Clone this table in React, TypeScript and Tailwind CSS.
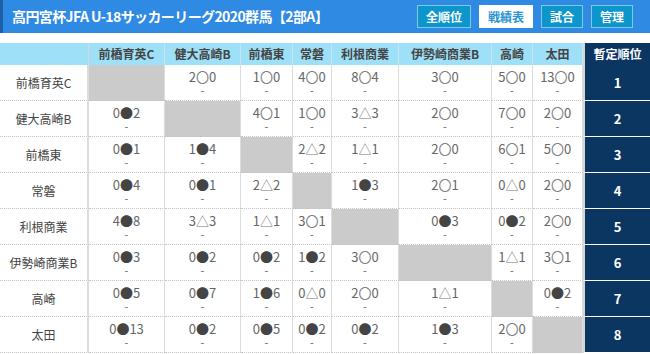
import React from "react"

const teams = ["前橋育英C", "健大高崎B", "前橋東", "常磐", "利根商業", "伊勢崎商業B", "高崎", "太田"]

const results: (string | null)[][] = [
  [null, "2〇0", "1〇0", "4〇0", "8〇4", "3〇0", "5〇0", "13〇0"],
  ["0●2", null, "4〇1", "1〇0", "3△3", "2〇0", "7〇0", "2〇0"],
  ["0●1", "1●4", null, "2△2", "1△1", "2〇0", "6〇1", "5〇0"],
  ["0●4", "0●1", "2△2", null, "1●3", "2〇1", "0△0", "2〇0"],
  ["4●8", "3△3", "1△1", "3〇1", null, "0●3", "0●2", "2〇0"],
  ["0●3", "0●2", "0●2", "1●2", "3〇0", null, "1△1", "3〇1"],
  ["0●5", "0●7", "1●6", "0△0", "2〇0", "1△1", null, "0●2"],
  ["0●13", "0●2", "0●5", "0●2", "0●2", "1●3", "2〇0", null],
]

const font = { fontFamily: '"Noto Sans CJK JP", "Noto Sans", sans-serif' }

function Score({ value }: { value: string }) {
  const m = value.match(/^(\d+)(.)(\d+)$/)
  if (!m) return <span>{value}</span>
  return (
    <span className="block leading-[14px]">
      {m[1]}
      <span className={m[2] === "●" ? "text-[#444]" : "text-[#777]"}>{m[2]}</span>
      {m[3]}
    </span>
  )
}

export default function App() {
  const buttons = ["全順位", "戦績表", "試合", "管理"]

  return (
    <div className="w-[650px] h-[354px] overflow-hidden bg-white" style={font}>
      {/* title bar */}
      <div className="flex h-[33px] items-center border-l-[3px] border-[#1d5fa6] bg-[#2f8ae4] pl-[9px] pr-[17px]">
        <h1 className="text-[14px] font-bold tracking-[-0.6px] text-white">
          高円宮杯JFA U-18サッカーリーグ2020群馬【2部A】
        </h1>
        <div className="ml-auto flex gap-[8px]">
          {buttons.map((b) => (
            <button
              key={b}
              className={
                b === "戦績表"
                  ? "h-[23px] border border-white bg-white px-[8px] text-[12px] font-bold leading-none text-[#2a93d4]"
                  : "h-[23px] border border-[#7ec8ea] bg-[#0d96cb] px-[8px] text-[12px] font-bold leading-none text-white"
              }
            >
              {b}
            </button>
          ))}
        </div>
      </div>

      {/* standings grid */}
      <div className="mt-[10px] grid grid-cols-[89px_76px_76px_52px_39px_67px_93px_41px_50px_67px]">
        <div className="h-[22px] border-r border-[#d6d6d6] bg-[#9ee0f7]" />
        {teams.map((t) => (
          <div
            key={t}
            className="flex h-[22px] items-center justify-center border-r border-[#c9e6f0] bg-[#9ee0f7] text-[12px] font-bold text-[#444]"
          >
            {t}
          </div>
        ))}
        <div className="flex h-[22px] items-center justify-center border-l-2 border-[#d6d6d6] bg-[#0c3662] text-[12px] font-bold text-white">
          暫定順位
        </div>

        {teams.map((team, r) => (
          <React.Fragment key={team}>
            <div className="flex h-[36px] items-center justify-center border-r-2 border-b border-r-[#dcdcdc] border-b-[#c4c4c4] border-dotted text-[12px] text-[#444] [border-right-style:solid]">
              {team}
            </div>
            {results[r].map((res, c) =>
              res === null ? (
                <div
                  key={c}
                  className="h-[36px] border-r border-b border-dotted border-b-[#c4c4c4] border-r-[#dcdcdc] bg-[#cbcbcb] [border-right-style:solid]"
                />
              ) : (
                <div
                  key={c}
                  className="flex h-[36px] flex-col items-center justify-center border-r border-b border-dotted border-b-[#c4c4c4] border-r-[#dcdcdc] text-[13px] text-[#666] [border-right-style:solid]"
                >
                  <Score value={res} />
                  <span className="block text-[11px] leading-[12px] text-[#666]">-</span>
                </div>
              )
            )}
            <div className="flex h-[36px] items-center justify-center border-l-2 border-b border-l-[#d6d6d6] border-b-white bg-[#0c3662] text-[13px] font-bold text-white">
              {r + 1}
            </div>
          </React.Fragment>
        ))}
      </div>
    </div>
  )
}
